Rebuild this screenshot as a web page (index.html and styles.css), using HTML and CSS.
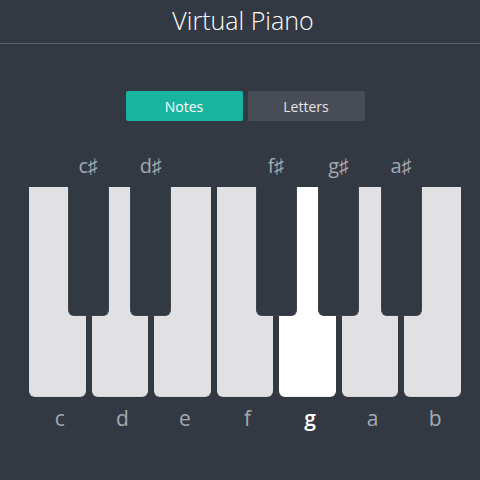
FILE: index.html
```html
<!DOCTYPE html>
<html lang="en">
<head>
    <meta charset="UTF-8">
    <meta name="viewport" content="width=device-width, initial-scale=1.0">
    <title>Virtual Piano</title>
    <link rel="stylesheet" href="styles.css">
</head>
<body>
    <header>
        <h1>Virtual Piano</h1>
    </header>

    <div class="container">
        <div class="mode-toggle">
            <button class="mode-button active">Notes</button>
            <button class="mode-button">Letters</button>
        </div>

        <div class="keyboard">
            <div class="white-keys">
                <div class="white-key"></div>
                <div class="white-key"></div>
                <div class="white-key"></div>
                <div class="white-key"></div>
                <div class="white-key pressed"></div>
                <div class="white-key"></div>
                <div class="white-key"></div>
            </div>
            <div class="black-key" style="left: 38.8px"><span class="label">c&#9839;</span></div>
            <div class="black-key" style="left: 101.3px"><span class="label">d&#9839;</span></div>
            <div class="black-key" style="left: 226.5px"><span class="label">f&#9839;</span></div>
            <div class="black-key" style="left: 289.1px"><span class="label">g&#9839;</span></div>
            <div class="black-key" style="left: 351.6px"><span class="label">a&#9839;</span></div>
        </div>

        <div class="note-labels">
            <span>c</span>
            <span>d</span>
            <span>e</span>
            <span>f</span>
            <span class="active">g</span>
            <span>a</span>
            <span>b</span>
        </div>
    </div>
</body>
</html>
```

FILE: styles.css
```css
body {
    margin: 0;
    font-family: "Open Sans", Arial, sans-serif;
    background-color: #333943;
    color: #fff;
}
header {
    height: 43px;
    border-bottom: 1px solid #5d626b;
    display: flex;
    justify-content: center;
    align-items: center;
    padding-left: 6px;
}
header h1 {
    margin: 0 0 3px;
    font-size: 25px;
    font-weight: 300;
}
.container {
    width: 432px;
    margin-left: 29px;
}
.mode-toggle {
    display: flex;
    justify-content: center;
    gap: 5px;
    margin-top: 47px;
}
.mode-button {
    width: 117px;
    height: 30px;
    border: none;
    border-radius: 2px;
    background: #474c56;
    color: #e2e4e8;
    font-family: "Open Sans", Arial, sans-serif;
    font-size: 14px;
    padding: 0;
}
.mode-button.active {
    background: #19b4a0;
    color: #fff;
}
.keyboard {
    position: relative;
    margin-top: 66px;
    height: 210px;
}
.white-keys {
    display: flex;
    gap: 6px;
    height: 100%;
}
.white-key {
    flex: 1;
    background: #e1e1e4;
    border-radius: 0 0 6px 6px;
    box-shadow: inset 0 -1px 0 rgba(0, 0, 0, 0.06);
}
.white-key.pressed {
    background: #fff;
}
.black-key {
    position: absolute;
    top: 0;
    width: 41px;
    height: 129px;
    background: #333943;
    border: 1px solid #3f454f;
    border-top: none;
    border-radius: 0 0 6px 6px;
    box-sizing: border-box;
}
.black-key .label {
    position: absolute;
    top: -34px;
    left: -10px;
    right: -10px;
    text-align: center;
    font-size: 20px;
    line-height: 26px;
    color: #a3a8b1;
}
.note-labels {
    display: flex;
    gap: 6px;
    margin-top: 8px;
}
.note-labels span {
    flex: 1;
    padding-left: 5px;
    text-align: center;
    font-size: 21px;
    line-height: 26px;
    color: #a3a8b1;
}
.note-labels span.active {
    color: #fff;
    font-weight: 600;
}
```
